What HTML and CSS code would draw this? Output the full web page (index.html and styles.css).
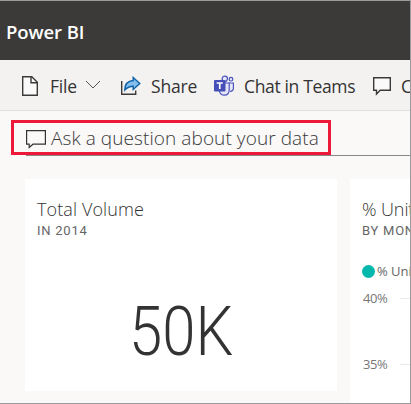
FILE: index.html
```html
<!DOCTYPE html>
<html lang="en">
<head>
<meta charset="utf-8">
<title>Power BI</title>
<link rel="stylesheet" href="styles.css">
</head>
<body>
<div class="window">
  <header class="header"><span class="brand">Power BI</span></header>
  <nav class="toolbar">
    <div class="item file">
      <svg class="icon" width="18" height="22" viewBox="0 0 18 22"><path d="M1.7 1.7H10.8L16.3 7.2V20.3H1.7Z" fill="#fafafa" stroke="#3b3a39" stroke-width="1.4"/><path d="M10 2V7.7H16" fill="none" stroke="#3b3a39" stroke-width="1.4"/></svg>
      <span class="label">File</span>
      <svg class="chevron" width="16" height="9" viewBox="0 0 16 9"><path d="M1 1L8 8L15 1" fill="none" stroke="#555" stroke-width="1"/></svg>
    </div>
    <div class="item share">
      <svg class="icon" width="22" height="20" viewBox="0 0 22 20"><path d="M1.7 5V18.3H15.7V14.5" fill="none" stroke="#3b3a39" stroke-width="1.4"/><path d="M13.2 1.4L19.8 7.4L13.2 13.4V10.2C9.5 10.2 7.2 11.4 4.8 14.1C4.8 8.5 7.8 4.9 13.2 4.5Z" fill="#83beec" stroke="#0f62a7" stroke-width="1.4"/></svg>
      <span class="label">Share</span>
    </div>
    <div class="item teams">
      <svg class="icon" width="22" height="22" viewBox="0 0 22 22"><g fill="#e7e7fa" stroke="#4b53bc" stroke-width="1.2"><circle cx="18" cy="4.2" r="1.8"/><path d="M15.4 8H20.4V13.5Q20.2 16.5 17 16.4"/><circle cx="11.8" cy="3.8" r="2.7"/><path d="M6.5 8H16.2V14.8C16.2 18 14.5 20.2 11.4 20.2C8.8 20.2 7 18.5 6.5 16.4Z"/></g><rect x="1" y="5" width="11.5" height="11.5" rx="1" fill="#464eb8"/><path d="M3.7 8H9.8M6.75 8V14" stroke="#fff" stroke-width="1.7"/></svg>
      <span class="label">Chat in Teams</span>
    </div>
    <div class="item comment">
      <svg class="icon" width="20" height="20" viewBox="0 0 20 20"><path d="M1.7 1.7H18.3V14.3H8.2L4.5 18V14.3H1.7Z" fill="#fafafa" stroke="#3b3a39" stroke-width="1.4"/></svg>
      <span class="label">Comment</span>
    </div>
  </nav>
  <main class="canvas">
    <div class="qna">
      <div class="ask">
        <svg class="bubble" width="22" height="20" viewBox="0 0 22 20"><path d="M1.6 1.6H20.4V15.2H8L4.2 18.5V15.2H1.6Z" fill="none" stroke="#333" stroke-width="1.2"/></svg>
        <span class="prompt">Ask a question about your data</span>
      </div>
    </div>
    <div class="tiles">
      <section class="tile volume">
        <h2><span>Total Volume</span></h2>
        <h3><span>IN 2014</span></h3>
        <div class="value"><span>50K</span></div>
      </section>
      <section class="tile units">
        <h2><span>% Units</span></h2>
        <h3><span>BY MONTH</span></h3>
        <div class="legend"><i></i><span>% Units</span></div>
        <div class="tick"><span>40%</span><b></b></div>
        <div class="tick"><span>35%</span><b></b></div>
      </section>
    </div>
  </main>
</div>
</body>
</html>
```
FILE: styles.css
```css
* { box-sizing: border-box; }
body { margin: 0; font-family: "Open Sans", "Noto Sans", sans-serif; color: #333; }
svg { display: block; flex: none; }
span { white-space: nowrap; }
.window { width: 411px; height: 404px; overflow: hidden; border: 1px solid #9b9b9b; border-left: 0; background: #faf9f8; }
.header { height: 59px; background: #3b3a38; color: #fff; display: flex; align-items: center; padding: 1px 0 0 6px; }
.brand { font-size: 18.5px; font-weight: 600; letter-spacing: -0.08px; }
.toolbar { height: 51px; background: #f3f2f1; border-bottom: 1px solid #e1dfdd; display: flex; }
.item { display: flex; flex: none; align-items: center; height: 52px; font-size: 17.5px; }
.file { width: 99px; padding-left: 21px; }
.share { width: 93px; padding-left: 21px; }
.teams { width: 159px; padding-left: 21px; }
.comment { padding-left: 21px; }
.label { font-weight: 375; letter-spacing: -0.36px; }
.share .label { letter-spacing: -.2px; }
.teams .label { letter-spacing: -.35px; }
.chevron { position: relative; top: -2px; left: 2px; }
.file .label { width: 36px; margin-left: 11px; letter-spacing: -.2px; }
.share .label, .teams .label, .comment .label { margin-left: 9px; }
.qna { margin-left: 26px; height: 45px; padding-top: 9px; border-bottom: 1px solid #8a8886; }
.ask { position: relative; width: 320px; height: 35px; margin-left: -15px; border: 3px solid #ee1838; display: flex; align-items: center; padding-left: 11px; }
.bubble { position: relative; top: 1px; }
.prompt { font-size: 19px; margin-left: 4px; color: #383838; font-weight: 340; letter-spacing: .08px; }
.tiles { display: flex; gap: 13px; padding: 23px 0 0 25px; }
.tile { background: #fff; flex: none; padding: 18px 12px 0; }
.volume { width: 312px; height: 212px; }
.units { width: 200px; height: 230px; }
h2, h3 { margin: 0; font-weight: 350; }
h2 { height: 25px; line-height: 25px; font-size: 18px; letter-spacing: .1px; }
.units h2 { letter-spacing: -.1px; }
h3 { height: 18px; font: 450 13px/18px Roboto, sans-serif; letter-spacing: .75px; color: #666; }
.value { font: 300 68px/80px Roboto, sans-serif; text-align: center; margin-top: 52px; }
.value span { display: inline-block; transform: scaleX(.88); }
.legend { display: flex; align-items: center; height: 20px; margin-top: 21px; font-size: 13px; color: #666; }
.legend i { width: 13px; height: 13px; border-radius: 50%; background: #01b8aa; margin-right: 2px; }
.tick { display: flex; align-items: center; height: 20px; margin: 7px 0 46px; font-size: 13px; color: #777; }
.tick span { width: 38px; padding-left: 1px; letter-spacing: -.4px; }
.tick + .tick { margin-top: 0; }
.tick b { width: 120px; height: 1px; background: #eaeaea; }
```
